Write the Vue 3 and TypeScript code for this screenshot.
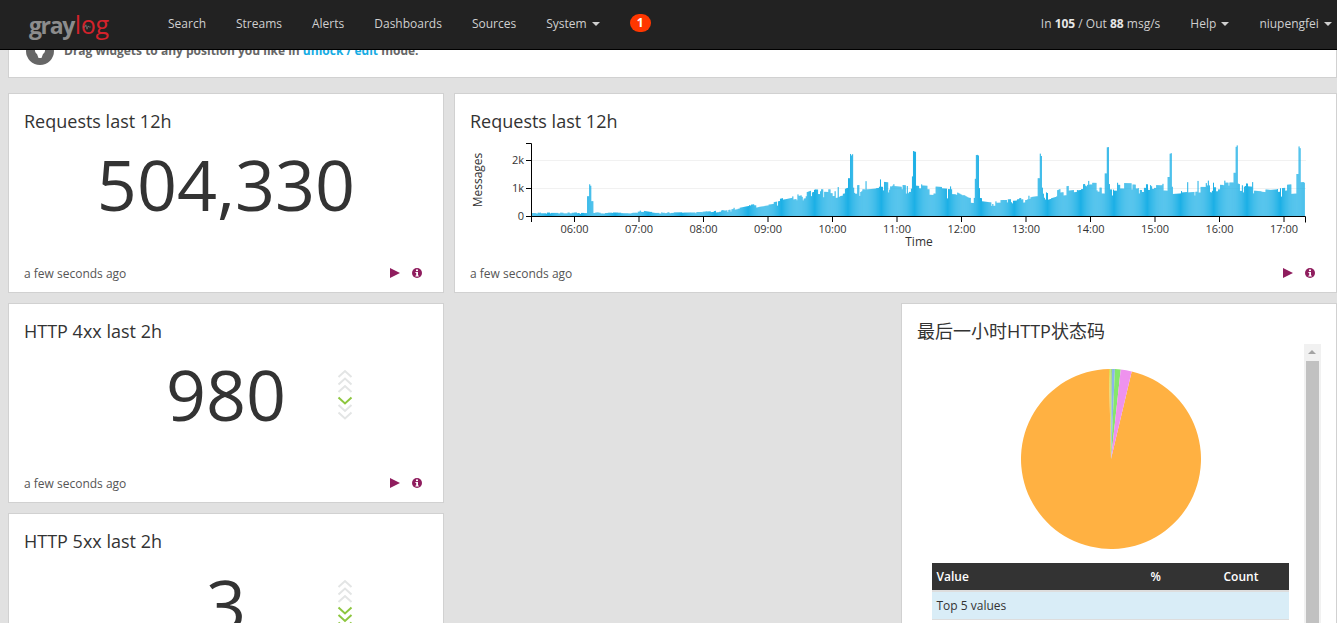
<script setup lang="ts">
// Graylog dashboard: top nav, number widgets, histogram and pie widget
const navLinks = ['Search', 'Streams', 'Alerts', 'Dashboards', 'Sources']

const chart = { left: 531.5, right: 1305.5, base: 216, offsetX: 531, offsetY: 143 }
const hours = ['06:00', '07:00', '08:00', '09:00', '10:00', '11:00', '12:00', '13:00', '14:00', '15:00', '16:00', '17:00']
const hourX = (i: number) => 574.5 + i * 64.5 - chart.offsetX

// rough outline of the traffic: [x on page, bar height in px]
const outline: [number, number][] = [
  [531, 3], [635, 3], [640, 5], [655, 3], [700, 3.5], [725, 5], [745, 9], [770, 13], [800, 19], [815, 24],
  [835, 23], [850, 27], [880, 30], [920, 26], [955, 24], [968, 17], [990, 14], [1015, 15], [1040, 18],
  [1060, 25], [1090, 29], [1130, 28], [1170, 26], [1200, 29], [1240, 29], [1270, 26], [1305, 29],
]
const spikes: [number, number][] = [
  [590, 33], [851, 63], [914, 66], [977, 62], [1040, 63],
  [1107, 71], [1170, 65], [1236, 72], [1299, 70],
]

let seed = 7
const rand = () => {
  seed = (seed * 16807) % 2147483647
  return seed / 2147483647
}

const baseAt = (x: number) => {
  for (let i = 1; i < outline.length; i++) {
    if (x <= outline[i][0]) {
      const [x0, y0] = outline[i - 1]
      const [x1, y1] = outline[i]
      return y0 + ((x - x0) / (x1 - x0)) * (y1 - y0)
    }
  }
  return 28
}

const barStep = 1.031
const bars: { x: number; h: number }[] = []
let noise = 1
for (let x = chart.left; x < chart.right - 1; x += barStep) {
  const base = baseAt(x)
  // heights hold for a few bars, which gives the stepped outline
  if (rand() > 0.6) noise = 0.78 + rand() * 0.4
  let h = base * noise
  if (rand() > 0.97) h = base * 1.22
  if (rand() > 0.97) h = base * 0.72
  for (const [sx, sh] of spikes) {
    const d = x - sx
    if (d > -1.2 && d < 1.2) h = sh - rand() * 3
    else if (d >= -3 && d <= -1.2) h = Math.max(h, sh * 0.6)
    else if (d >= 1.2 && d <= 2.6) h = Math.max(h, sh * 0.45)
  }
  bars.push({ x: x - chart.offsetX, h })
}

// pie slices, degrees clockwise from 12 o'clock
const pieCx = 90
const pieCy = 90
const pieR = 90
const slicePath = (from: number, to: number) => {
  const a = ((from - 90) * Math.PI) / 180
  const b = ((to - 90) * Math.PI) / 180
  const large = to - from > 180 ? 1 : 0
  return `M${pieCx} ${pieCy}L${pieCx + pieR * Math.cos(a)} ${pieCy + pieR * Math.sin(a)}A${pieR} ${pieR} 0 ${large} 1 ${pieCx + pieR * Math.cos(b)} ${pieCy + pieR * Math.sin(b)}Z`
}
const slices = [
  { from: 13.3, to: 358.7, color: '#ffb142' },
  { from: 358.7, to: 359.6, color: '#e3d84a' },
  { from: 359.6, to: 360.6, color: '#a5dc6a' },
  { from: 0.6, to: 2.5, color: '#8cb4ec' },
  { from: 2.5, to: 6.2, color: '#86e66a' },
  { from: 6.2, to: 13.3, color: '#ee92ee' },
]

// trend chevrons: three up, three down, `active` down ones are green
const chevrons = (active: number) =>
  [0, 1, 2, 3, 4, 5].map((i) => ({
    y: i < 3 ? 15 + i * 7.5 : 41.5 + (i - 3) * 7.5,
    up: i < 3,
    on: i >= 3 && i - 3 < active,
  }))

const lightWidgets = [
  { title: 'HTTP 4xx last 2h', value: '980', trend: chevrons(1), area: 'w3' },
  { title: 'HTTP 5xx last 2h', value: '3', trend: chevrons(3), area: 'w4' },
]
</script>

<template>
  <div class="page">
    <nav class="navbar">
      <div class="brand">
        <span class="brand-gray">gray</span><span class="brand-red">log</span>
        <svg class="brand-wave" width="8" height="6" viewBox="0 0 10 8">
          <polyline points="0,4 2.5,4 3.5,1 5,7 6.5,2.5 7.5,4 10,4" fill="none" stroke="#8c8c8c" stroke-width="0.8" />
        </svg>
      </div>
      <a v-for="link in navLinks" :key="link" class="nav-link">{{ link }}</a>
      <a class="nav-link">System <i class="caret" /></a>
      <span class="badge">1</span>
      <div class="nav-right">
        <span class="throughput">In <b>105</b> / Out <b>88</b> msg/s</span>
        <a class="nav-link">Help <i class="caret" /></a>
        <a class="nav-link">niupengfei <i class="caret" /></a>
      </div>
    </nav>

    <div class="hint">
      <span class="hint-icon">
        <svg width="14" height="18" viewBox="0 0 14 18">
          <path d="M7 3a5 5 0 0 0-3 9l1.5 4h3l1.5-4a5 5 0 0 0-3-9z" fill="#fff" />
        </svg>
      </span>
      <span class="hint-text">Drag widgets to any position you like in <a>unlock / edit</a> mode.</span>
    </div>

    <div class="grid">
      <section class="card">
        <h2 class="card-title">Requests last 12h</h2>
        <div class="value big">504,330</div>
        <footer class="card-foot">
          <span>a few seconds ago</span>
          <span class="foot-icons">
            <svg width="10" height="10" viewBox="0 0 10 10"><path d="M0 0l10 5-10 5z" fill="#8f1d5e" /></svg>
            <svg width="10" height="10" viewBox="0 0 10 10">
              <circle cx="5" cy="5" r="5" fill="#8f1d5e" />
              <rect x="4" y="1.5" width="2" height="1.6" fill="#fff" />
              <path d="M3.4 4h2.6v3.4h.8v1H3.4v-1h.8V5h-.8z" fill="#fff" />
            </svg>
          </span>
        </footer>
      </section>

      <section class="card wide">
        <h2 class="card-title">Requests last 12h</h2>
        <div class="chart-wrap">
          <svg class="chart" width="850" height="110" viewBox="0 0 850 110">
            <line x1="0.5" x2="775" y1="17.5" y2="17.5" stroke="#f1f1f1" />
            <line x1="0.5" x2="775" y1="45.5" y2="45.5" stroke="#f1f1f1" />
            <g fill="#1cb0e6">
              <rect v-for="(b, i) in bars" :key="i" :x="b.x" :y="73 - b.h" width="1" :height="b.h" />
            </g>
            <g stroke="#000" fill="none">
              <path d="M0.5 0H-5M0.5 0V73M-5 73H774.5V79" transform="translate(0 0.5)" />
              <path d="M0.5 73.5V79" />
              <line x1="-5" x2="0.5" y1="17.5" y2="17.5" />
              <line x1="-5" x2="0.5" y1="45.5" y2="45.5" />
              <line v-for="(h, i) in hours" :key="h" :x1="hourX(i)" :x2="hourX(i)" y1="73" y2="79" />
            </g>
            <g class="tick-text">
              <text x="-7" y="21" text-anchor="end">2k</text>
              <text x="-7" y="49" text-anchor="end">1k</text>
              <text x="-7" y="77" text-anchor="end">0</text>
              <text v-for="(h, i) in hours" :key="h" :x="hourX(i)" y="90" text-anchor="middle">{{ h }}</text>
              <text class="time-label" x="388" y="103" text-anchor="middle">Time</text>
            </g>
          </svg>
          <span class="y-label">Messages</span>
        </div>
        <footer class="card-foot">
          <span>a few seconds ago</span>
          <span class="foot-icons">
            <svg width="10" height="10" viewBox="0 0 10 10"><path d="M0 0l10 5-10 5z" fill="#8f1d5e" /></svg>
            <svg width="10" height="10" viewBox="0 0 10 10">
              <circle cx="5" cy="5" r="5" fill="#8f1d5e" />
              <rect x="4" y="1.5" width="2" height="1.6" fill="#fff" />
              <path d="M3.4 4h2.6v3.4h.8v1H3.4v-1h.8V5h-.8z" fill="#fff" />
            </svg>
          </span>
        </footer>
      </section>

      <section v-for="w in lightWidgets" :key="w.title" class="card" :class="w.area">
        <h2 class="card-title">{{ w.title }}</h2>
        <div class="value-row">
          <div class="value">{{ w.value }}</div>
          <svg class="trend" width="16" height="60" viewBox="0 0 16 60">
            <polyline
              v-for="(c, i) in w.trend"
              :key="i"
              :points="c.up ? `1.5,${c.y} 8,${c.y - 6} 14.5,${c.y}` : `1.5,${c.y - 6} 8,${c.y} 14.5,${c.y - 6}`"
              fill="none"
              stroke-width="2"
              :stroke="c.on ? '#8dc63f' : '#e3e5e5'"
            />
          </svg>
        </div>
        <footer class="card-foot">
          <span>a few seconds ago</span>
          <span class="foot-icons">
            <svg width="10" height="10" viewBox="0 0 10 10"><path d="M0 0l10 5-10 5z" fill="#8f1d5e" /></svg>
            <svg width="10" height="10" viewBox="0 0 10 10">
              <circle cx="5" cy="5" r="5" fill="#8f1d5e" />
              <rect x="4" y="1.5" width="2" height="1.6" fill="#fff" />
              <path d="M3.4 4h2.6v3.4h.8v1H3.4v-1h.8V5h-.8z" fill="#fff" />
            </svg>
          </span>
        </footer>
      </section>

      <section class="card pie-card">
        <h2 class="card-title">最后一小时HTTP状态码</h2>
        <div class="pie-body">
          <div class="pie-content">
            <svg class="pie" width="180" height="180" viewBox="0 0 180 180">
              <path v-for="s in slices" :key="s.from" :d="slicePath(s.from, s.to)" :fill="s.color" />
            </svg>
            <table class="values">
              <thead>
                <tr><th class="c-value">Value</th><th class="c-pct">%</th><th class="c-count">Count</th></tr>
              </thead>
              <tbody>
                <tr class="top-row"><td colspan="3">Top 5 values</td></tr>
              </tbody>
            </table>
          </div>
          <div class="scrollbar">
            <span class="scroll-up" />
            <span class="scroll-thumb" />
          </div>
        </div>
      </section>
    </div>
  </div>
</template>

<style>
html,
body {
  margin: 0;
  height: 100%;
  overflow: hidden;
  background: #e1e1e1;
}
</style>

<style scoped>
.page {
  height: 623px;
  overflow: hidden;
  background: #e1e1e1;
  font-family: "Open Sans", "Noto Sans CJK SC", sans-serif;
  color: #333;
}

.navbar {
  position: fixed;
  top: 0;
  left: 0;
  right: 0;
  z-index: 2;
  box-sizing: border-box;
  height: 50px;
  display: flex;
  align-items: center;
  padding: 0 5px 3px 29px;
  background: #222;
  border-bottom: 1px solid #000;
  font-size: 12px;
}

.brand {
  position: relative;
  width: 139px;
  font-size: 25px;
  line-height: 30px;
  margin-top: 3px;
  white-space: nowrap;
}

.brand-gray {
  color: #8c8c8c;
  font-size: 23px;
  font-weight: 700;
  letter-spacing: -1.4px;
  margin-right: 1px;
}

.brand-red {
  color: #d3222b;
  letter-spacing: -0.4px;
}

.brand-wave {
  position: absolute;
  left: 54px;
  top: 15px;
}

.nav-link {
  color: #d0d0d0;
  margin-right: 30px;
  white-space: nowrap;
}

.caret {
  display: inline-block;
  width: 0;
  height: 0;
  margin-left: 2px;
  vertical-align: middle;
  border-top: 4px solid #d0d0d0;
  border-left: 4px solid transparent;
  border-right: 4px solid transparent;
}

.badge {
  background: #ff3700;
  color: #fff;
  font-weight: 700;
  font-size: 12px;
  line-height: 18px;
  width: 21px;
  border-radius: 10px;
  text-align: center;
}

.nav-right {
  margin-left: auto;
  display: flex;
  align-items: center;
}

.nav-right .nav-link:last-child {
  margin-right: 0;
}

.throughput {
  color: #d0d0d0;
  margin-right: 30px;
}

.throughput b {
  color: #e6e6e6;
}

.hint {
  box-sizing: border-box;
  height: 78px;
  margin: 0 0 15px 8px;
  padding: 36px 0 0 17px;
  display: flex;
  align-items: flex-start;
  gap: 10px;
  background: #fff;
  border: 1px solid #d1d1d1;
}

.hint-icon {
  width: 28px;
  height: 28px;
  border-radius: 50%;
  background: #666;
  display: flex;
  align-items: center;
  justify-content: center;
  flex: none;
}

.hint-text {
  font-size: 12px;
  font-weight: 700;
  color: #666;
  line-height: 28px;
}

.hint-text a {
  color: #16ace3;
}

.grid {
  display: grid;
  grid-template-columns: 436px 437px 436px;
  grid-auto-rows: 200px;
  gap: 10px;
  padding-left: 8px;
}

.card {
  box-sizing: border-box;
  position: relative;
  display: flex;
  flex-direction: column;
  padding: 15px 15px 10px;
  background: #fff;
  border: 1px solid #d1d1d1;
  min-width: 0;
}

.wide {
  grid-column: 2 / span 2;
}

.w3,
.w4 {
  grid-column: 1;
}

.pie-card {
  grid-column: 3;
  grid-row: 2 / span 2;
}

.card-title {
  margin: 0;
  font-size: 18px;
  font-weight: 400;
  line-height: 25px;
  color: #333;
}

.value {
  font-size: 70px;
  line-height: 80px;
  text-align: center;
}

.big {
  margin-top: 10px;
}

.value-row {
  position: relative;
  margin-top: 10px;
  flex: none;
}

.trend {
  position: absolute;
  left: 313px;
  top: 8px;
}

.card-foot {
  margin-top: auto;
  display: flex;
  justify-content: space-between;
  align-items: center;
  font-size: 12px;
  line-height: 16px;
  color: #555;
  padding-right: 6px;
}

.foot-icons {
  display: flex;
  gap: 12px;
  margin-top: -2px;
}

.chart-wrap {
  position: relative;
  height: 0;
}

.chart {
  position: absolute;
  left: 61px;
  top: 9px;
  overflow: visible;
}

.tick-text {
  font-size: 11px;
  fill: #333;
}

.time-label {
  font-size: 12px;
}

.y-label {
  position: absolute;
  left: 0;
  top: 39px;
  font-size: 12px;
  transform: translate(-22px, 0) rotate(-90deg);
  width: 60px;
  text-align: center;
  line-height: 14px;
}

.pie-body {
  display: flex;
  justify-content: space-between;
}

.pie-content {
  width: 358px;
  margin-left: 14px;
  display: flex;
  flex-direction: column;
  align-items: center;
}

.pie {
  margin: 25px 0 14px 2px;
  flex: none;
}

.values {
  width: 357px;
  border-collapse: collapse;
  font-size: 12px;
  table-layout: fixed;
}

.values th {
  background: #333;
  color: #fff;
  font-weight: 600;
  text-align: left;
  height: 27px;
  padding: 0 5px;
  border-bottom: 2px solid #ddd;
}

.c-value {
  width: 204px;
}

.c-pct {
  width: 63px;
}

.top-row td {
  background: #d9edf7;
  height: 27px;
  padding: 0 5px;
  border-bottom: 1px solid #ddd;
}

.scrollbar {
  width: 17px;
  height: 284px;
  background: #f1f1f1;
  position: relative;
  flex: none;
}

.scroll-up {
  position: absolute;
  left: 4px;
  top: 6px;
  border-bottom: 4px solid #a3a3a3;
  border-left: 4px solid transparent;
  border-right: 4px solid transparent;
}

.scroll-thumb {
  position: absolute;
  left: 2px;
  right: 2px;
  top: 17px;
  bottom: 0;
  background: #c1c1c1;
}
</style>
